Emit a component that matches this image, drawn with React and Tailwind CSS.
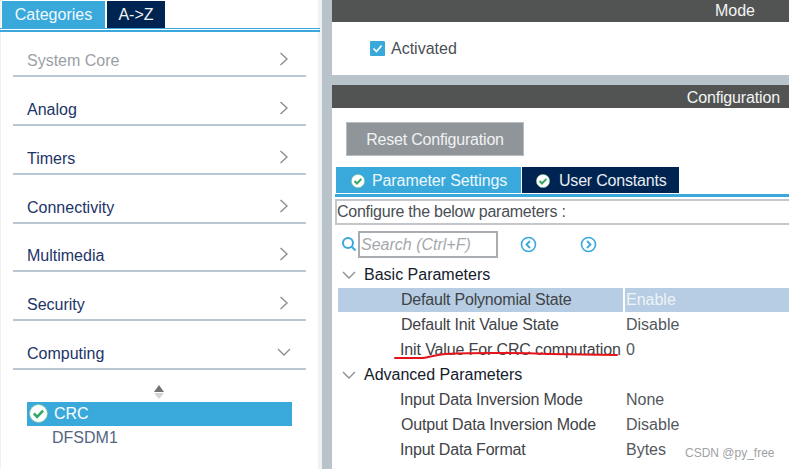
const font = { fontFamily: '"Liberation Sans", Arial, sans-serif' };

function Chevron({ down }) {
  return (
    <svg width="16" height="16" viewBox="0 0 16 16" fill="none" stroke="#8a8f94" strokeWidth="1.4" className="shrink-0">
      {down ? <path d="M2 5l6 6 6-6" /> : <path d="M4.5 2l6.5 6-6.5 6" />}
    </svg>
  );
}

function Check({ size = 14, ring = "#ffffff", mark = "#35a765" }) {
  return (
    <svg width={size} height={size} viewBox="0 0 14 14" className="shrink-0">
      <circle cx="7" cy="7" r="6.6" fill={ring} stroke="#7fc79b" strokeWidth="0.6" />
      <path d="M3.6 7l2.4 2.5 4.4-4.6" fill="none" stroke={mark} strokeWidth="2" />
    </svg>
  );
}

function Cat({ label, muted, down, first }) {
  return (
    <div className={(first ? "h-[45.2px]" : "h-[48.8px]") + " shrink-0 ml-[12px] w-[293px] border-b-2 border-[#b9c6d4] flex items-end justify-between pl-[14px] pr-[14px] pb-[2px]"}>
      <span className={"text-[16px] leading-[24px] " + (muted ? "text-[#9aa0a6]" : "text-[#1d3468]")}>{label}</span>
      <span className="mb-[6px]"><Chevron down={down} /></span>
    </div>
  );
}

function Param({ label, value, active, labelClass = "tracking-[-0.2px]" }) {
  return (
    <div className="h-[25px] flex items-center text-[16px] leading-[20px] text-[#3f4347]">
      <div className={"w-[285px] shrink-0 h-[24px] ml-[6px] flex items-center pl-[63px] " + (active ? "bg-[#b6cde3]" : "")}>
        <span className={"whitespace-nowrap " + labelClass}>{label}</span>
      </div>
      <div className={"flex-1 h-[24px] ml-[2px] flex items-center pl-[1px] " + (active ? "bg-[#b6cde3] text-[#eef3f8]" : "text-[#54585c]")}>{value}</div>
    </div>
  );
}

function Group({ label }) {
  return (
    <div className="h-[25px] flex items-center pl-[9px] text-[16px] leading-[20px] text-[#14202c]">
      <Chevron down />
      <span className="ml-[7px]">{label}</span>
    </div>
  );
}

function RoundBtn({ d }) {
  return (
    <svg width="17" height="17" viewBox="0 0 17 17" fill="none" stroke="#39a9dc" className="shrink-0">
      <circle cx="8.5" cy="8.5" r="7" strokeWidth="1.6" />
      <path d={d} strokeWidth="1.8" />
    </svg>
  );
}

export default function App() {
  return (
    <div style={font} className="w-[789px] h-[469px] overflow-hidden flex bg-[#b8c4ca] relative">
      {/* left panel */}
      <div className="w-[322px] h-full bg-white flex flex-col shrink-0 border-l border-[#eef0f1] border-r-[4px] border-r-[#f0f1f2]">
        <div className="h-[27px] mt-px flex shrink-0 pl-px">
          <div className="w-[103px] bg-[#39a9dc] text-[#f0f9fd] text-[16px] flex items-center justify-center pt-px">Categories</div>
          <div className="w-[58px] ml-[2px] bg-[#002451] text-[#f0f4f8] text-[16px] flex items-center justify-center pt-px">A-&gt;Z</div>
        </div>
        <div className="h-[4px] shrink-0 border-t border-[#39a9dc] border-b-[2px] border-b-[#39a9dc] -ml-px -mr-[2px]" />
        <Cat label="System Core" muted first />
        <Cat label="Analog" />
        <Cat label="Timers" />
        <Cat label="Connectivity" />
        <Cat label="Multimedia" />
        <Cat label="Security" />
        <Cat label="Computing" down />
        <div className="flex justify-center mt-[14px] h-[16px] shrink-0">
          <svg width="12" height="16" viewBox="0 0 12 16" className="-ml-[1px]">
            <path d="M6 1l5 7H1z" fill="#6f7376" />
            <path d="M6 15l5-6H1z" fill="#d3d6d8" />
          </svg>
        </div>
        <div className="mt-[2px] ml-[26px] w-[265px] h-[24px] bg-[#39a9dc] flex items-center pl-[2px] text-white text-[16px] shrink-0">
          <Check size={19} />
          <span className="ml-[6px]">CRC</span>
        </div>
        <div className="ml-[51px] h-[25px] flex items-center text-[16px] text-[#54657f]">DFSDM1</div>
      </div>

      {/* right */}
      <div className="ml-[10px] flex-1 flex flex-col min-w-0">
        <div className="h-[22px] bg-[#525453] text-[#f2f4f5] text-[16px] flex items-center justify-end pr-[34px] shrink-0">Mode</div>
        <div className="h-[53px] bg-white flex items-center pl-[38px] shrink-0">
          <span className="w-[15px] h-[15px] bg-[#39a9dc] rounded-[1px] flex items-center justify-center">
            <svg width="11" height="11" viewBox="0 0 11 11" fill="none" stroke="#fff" strokeWidth="1.6"><path d="M1.5 5.5l3 3 5-6" /></svg>
          </span>
          <span className="ml-[6px] text-[16px] text-[#4a4f55]">Activated</span>
        </div>
        <div className="h-[10px] shrink-0" />
        <div className="h-[23px] bg-[#525453] text-[#f2f4f5] text-[16px] tracking-[-0.15px] flex items-center justify-end pr-[9px] pt-[2px] shrink-0">Configuration</div>
        <div className="flex-1 bg-white flex flex-col min-h-0 relative">
          <div className="mt-[14px] ml-[14px] w-[178px] h-[34px] bg-[#90959a] border border-[#b8bdc2] text-[#f1f2f3] text-[16px] tracking-[-0.2px] flex items-center justify-center pt-[2px] shrink-0">Reset Configuration</div>
          <div className="mt-[11px] ml-[4px] flex h-[26px] shrink-0">
            <div className="w-[185px] bg-[#39a9dc] text-[#eef8fc] text-[16px] tracking-[-0.1px] flex items-center pl-[15px] pt-px">
              <Check size={14} />
              <span className="ml-[7px]">Parameter Settings</span>
            </div>
            <div className="w-[157px] ml-px bg-[#002451] text-[#e8edf2] text-[16px] tracking-[-0.2px] flex items-center pl-[14px] pt-px">
              <Check size={14} />
              <span className="ml-[9px]">User Constants</span>
            </div>
          </div>
          <div className="mt-[1px] ml-[3px] h-[3px] bg-[#39a9dc] shrink-0" />
          <div className="mt-[2px] ml-[3px] h-[26px] border-2 border-r-0 border-[#c4c7ca] text-[16px] tracking-[-0.25px] leading-[20px] text-[#4a4f55] flex items-center shrink-0">Configure the below parameters :</div>
          <div className="mt-[5px] ml-[9px] h-[28px] flex items-center shrink-0">
            <svg width="16" height="16" viewBox="0 0 16 16" fill="none" stroke="#39a9dc" strokeWidth="2" className="shrink-0"><circle cx="7" cy="7" r="5" /><path d="M10.5 10.5l4 4" /></svg>
            <div className="ml-px w-[140px] h-[27px] border-2 border-[#a9adb1] text-[#a4a8ac] italic text-[16px] flex items-center pl-[1px] pt-[2px]">Search (Ctrl+F)</div>
            <span className="ml-[22px]"><RoundBtn d="M10 5l-3.5 3.5L10 12" /></span>
            <span className="ml-[43px]"><RoundBtn d="M7 5l3.5 3.5L7 12" /></span>
          </div>
          <div className="h-[4px] shrink-0" />
          <Group label="Basic Parameters" />
          <Param label="Default Polynomial State" value="Enable" active />
          <Param label="Default Init Value State" value="Disable" />
          <Param label="Init Value For CRC computation" value="0" labelClass="-ml-px tracking-[-0.13px]" />
          <Group label="Advanced Parameters" />
          <Param label="Input Data Inversion Mode" value="None" labelClass="-ml-px tracking-[-0.2px]" />
          <Param label="Output Data Inversion Mode" value="Disable" />
          <Param label="Input Data Format" value="Bytes" labelClass="-ml-px tracking-[-0.2px]" />
        </div>
      </div>

      {/* annotation & watermark overlays */}
      <svg width="240" height="20" viewBox="0 0 240 20" fill="none" className="absolute left-[390px] top-[345px]">
        <path d="M5 13 L 33 13 C 40 12, 44 10, 55 9 C 90 7.5, 130 8, 160 9 C 185 9.5, 205 9.5, 227 10" stroke="#e5141c" strokeWidth="2" strokeLinecap="round" />
      </svg>
      <span className="absolute left-[685px] top-[445px] text-[12px] leading-[16px] text-[#a0a2a4]">CSDN @py_free</span>
    </div>
  );
}
